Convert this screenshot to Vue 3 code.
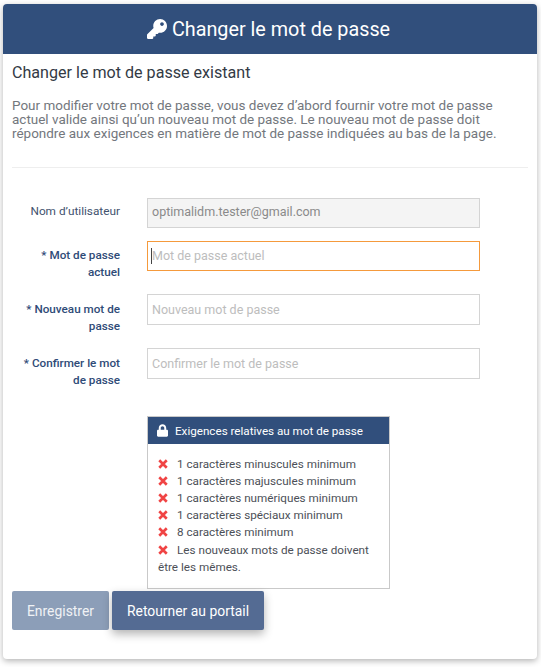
<script setup>
const fields = [
  { id: 'current', label: '* Mot de passe actuel', placeholder: 'Mot de passe actuel', active: true },
  { id: 'next', label: '* Nouveau mot de passe', placeholder: 'Nouveau mot de passe' },
  { id: 'confirm', label: '* Confirmer le mot de passe', placeholder: 'Confirmer le mot de passe' }
]
const rules = [
  '1 caractères minuscules minimum',
  '1 caractères majuscules minimum',
  '1 caractères numériques minimum',
  '1 caractères spéciaux minimum',
  '8 caractères minimum',
  'Les nouveaux mots de passe doivent être les mêmes.'
]
</script>

<template>
  <div class="page">
    <main class="card">
      <header class="head">
        <svg class="key" viewBox="0 0 512 512" aria-hidden="true">
          <path fill="#fff" d="M512 176.001C512 273.203 433.202 352 336 352c-11.22 0-22.19-1.062-32.827-3.069l-24.012 27.014A23.999 23.999 0 0 1 261.223 384H224v40c0 13.255-10.745 24-24 24h-40v40c0 13.255-10.745 24-24 24H24c-13.255 0-24-10.745-24-24v-78.059c0-6.365 2.529-12.47 7.029-16.971l161.802-161.802C163.108 213.814 160 195.271 160 176 160 78.798 238.797.001 335.999 0 433.488-.001 512 78.511 512 176.001zM336 128c0 26.51 21.49 48 48 48s48-21.49 48-48-21.49-48-48-48-48 21.49-48 48z" />
        </svg>
        <h1>Changer le mot de passe</h1>
      </header>

      <section class="intro">
        <h2>Changer le mot de passe existant</h2>
        <p>Pour modifier votre mot de passe, vous devez d’abord fournir votre mot de passe actuel valide ainsi qu’un nouveau mot de passe. Le nouveau mot de passe doit répondre aux exigences en matière de mot de passe indiquées au bas de la page.</p>
      </section>

      <form class="form" @submit.prevent>
        <div class="row row-user">
          <label class="label plain">Nom d’utilisateur</label>
          <input class="field readonly" value="optimalidm.tester@gmail.com" readonly />
        </div>
        <div v-for="f in fields" :key="f.id" class="row" :class="{ 'row-active': f.active }">
          <label class="label">{{ f.label }}</label>
          <div class="field-wrap">
            <input class="field" :placeholder="f.placeholder" />
            <span v-if="f.active" class="caret"></span>
          </div>
        </div>

        <aside class="rules">
          <div class="rules-head">
            <svg class="lock" viewBox="0 0 448 512" aria-hidden="true">
              <path fill="#fff" d="M400 224h-24v-72C376 68.200 307.800 0 224 0S72 68.200 72 152v72H48c-26.500 0-48 21.500-48 48v192c0 26.500 21.500 48 48 48h352c26.500 0 48-21.500 48-48V272c0-26.500-21.500-48-48-48zm-104 0H152v-72c0-39.700 32.300-72 72-72s72 32.300 72 72v72z" />
            </svg>
            <span>Exigences relatives au mot de passe</span>
          </div>
          <ul>
            <li v-for="r in rules" :key="r">
              <svg class="cross" viewBox="0 0 12 12" aria-hidden="true">
                <path d="M1.500 1.500l9 9M10.500 1.500l-9 9" stroke="#f04444" stroke-width="3.200" fill="none" />
              </svg>{{ r }}
            </li>
          </ul>
        </aside>

        <div class="actions">
          <button type="button" class="btn disabled">Enregistrer</button>
          <button type="button" class="btn primary">Retourner au portail</button>
        </div>
      </form>
    </main>
  </div>
</template>

<style scoped>
.page {
  width: 541px;
  height: 667px;
  box-sizing: border-box;
  padding: 4px 4px 8px 3px;
  font-family: Roboto, "Liberation Sans", sans-serif;
  overflow: hidden;
}
.card {
  height: 655px;
  background: #fff;
  border-radius: 4px;
  box-shadow: 0 2px 6px rgba(0, 0, 0, 0.3);
  overflow: hidden;
}
.head {
  height: 50px;
  background: #314f7c;
  color: #fff;
  display: flex;
  align-items: center;
  justify-content: center;
  gap: 5px;
}
.key { width: 20px; height: 20px; }
h1 { margin: 0 3px 0 0; font-size: 19.800px; font-weight: 400; }
.intro {
  margin: 0 9px;
  padding-top: 9px;
  height: 104px;
  border-bottom: 1px solid #eeeeee;
}
h2 {
  margin: 0;
  font-size: 16.100px;
  line-height: 19px;
  font-weight: 400;
  color: #333a45;
}
.intro p {
  margin: 16px 0 0;
  font-size: 13.480px;
  line-height: 14px;
  color: #73777d;
}
.form { padding-top: 30px; }
.row {
  display: grid;
  grid-template-columns: 100px 333px;
  column-gap: 27px;
  padding-left: 17px;
  height: 54px;
  align-items: start;
}
.row-user { height: 43px; }
.row-active { height: 53px; }
.label {
  text-align: right;
  font-size: 11.700px;
  line-height: 17px;
  font-weight: 500;
  color: #2f4b77;
  padding-top: 7px;
}
.row-active .label { padding-top: 6px; }
.row-user .label {
  font-size: 11.800px;
  font-weight: 400;
  color: #42526e;
  padding-top: 5px;
}
.field-wrap { position: relative; }
.field {
  display: block;
  width: 333px;
  height: 31px;
  box-sizing: border-box;
  padding: 0 4px;
  border: 1px solid #d4d4d4;
  border-radius: 0;
  outline: none;
  background: #fff;
  font-family: inherit;
  font-size: 12.500px;
  color: #8a8a8a;
}
.field::placeholder { color: #bdbdbd; opacity: 1; }
.row-user .field {
  background: #f4f4f4;
  height: 30px;
  padding-bottom: 4px;
}
.row-active .field {
  border: 1px solid #f59a3c;
  height: 30px;
  padding-bottom: 1px;
}
.caret {
  position: absolute;
  left: 4px;
  top: 7px;
  width: 1px;
  height: 16px;
  background: #444;
}
.rules {
  width: 243px;
  height: 173px;
  box-sizing: border-box;
  margin: 14px 0 0 144px;
  border: 1px solid #c9c9c9;
}
.rules-head {
  height: 27px;
  background: #314f7c;
  color: #fff;
  display: flex;
  align-items: center;
  gap: 7px;
  padding: 0 9px;
  font-size: 11.650px;
}
.lock { width: 11px; height: 13px; flex: none; }
ul {
  list-style: none;
  margin: 0;
  padding: 11.600px 10px 0;
}
li {
  font-size: 11.700px;
  line-height: 17.200px;
  color: #4c5057;
}
.cross { width: 10px; height: 10px; margin-right: 9px; vertical-align: -1px; }
.actions {
  display: flex;
  gap: 3px;
  margin: 2px 0 0 9px;
}
.btn {
  height: 39px;
  border: 0;
  border-radius: 2px;
  color: #fff;
  font-family: inherit;
  font-size: 13.900px;
  padding: 0;
}
.disabled { width: 97px; background: #8c9eb8; color: #f0f2f5; }
.primary {
  width: 152px;
  background: #546b93;
  box-shadow: 0 4px 10px rgba(0, 0, 0, 0.3);
}
</style>
